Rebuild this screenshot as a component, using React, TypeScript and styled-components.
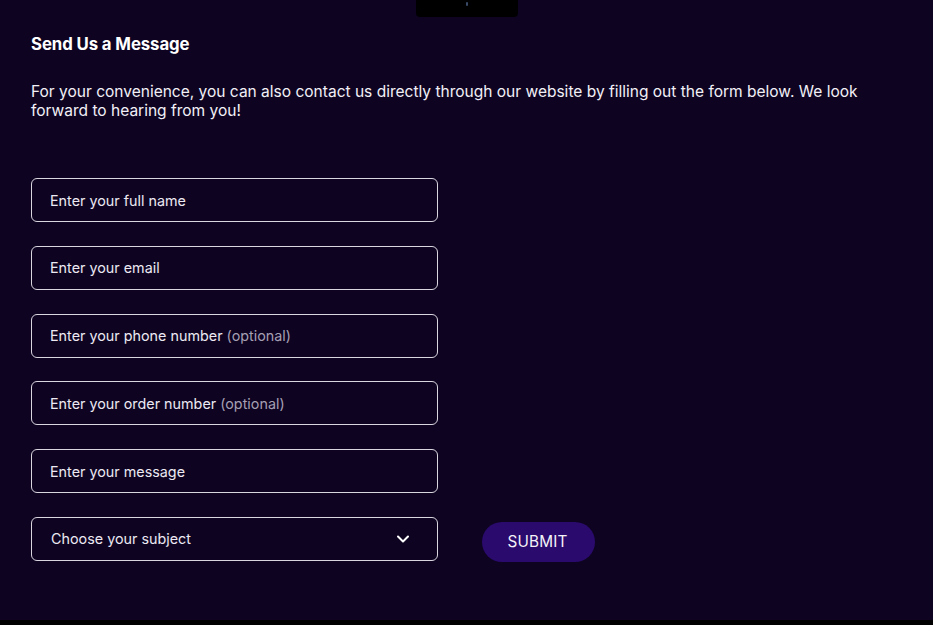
import React from "react";
import styled, { createGlobalStyle } from "styled-components";

const Global = createGlobalStyle`
  html, body { margin: 0; padding: 0; background: #0e0422; }
  body { font-family: Inter, "Noto Sans", sans-serif; color: #ffffff; }
  * { box-sizing: border-box; }
`;

const Page = styled.div`
  width: 933px;
  height: 625px;
  background: #0e0422;
  display: flex;
  flex-direction: column;
  overflow: hidden;
`;

const TopTab = styled.div`
  align-self: center;
  width: 102px;
  height: 17px;
  margin-left: 1px;
  background: #000000;
  border-radius: 0 0 4px 4px;
  display: flex;
  justify-content: center;
  padding-top: 2px;
`;

const Dot = styled.div`
  width: 2px;
  height: 4px;
  border-radius: 1px;
  background: #3a4a66;
`;

const Content = styled.main`
  flex: 1;
  padding: 17px 0 0 31px;
  display: flex;
  flex-direction: column;
`;

const Heading = styled.h2`
  margin: 0;
  font-size: 16.8px;
  font-weight: 700;
  line-height: 20px;
  letter-spacing: -0.1px;
`;

const Intro = styled.p`
  margin: 28px 0 0;
  width: 850px;
  font-size: 15.52px;
  line-height: 19px;
  color: #f2f0f6;
`;

const FormRow = styled.div`
  margin-top: 58px;
  display: flex;
  align-items: flex-end;
  gap: 44px;
`;

const Fields = styled.div`
  display: flex;
  flex-direction: column;
  gap: 23.8px;
  width: 407px;
`;

const Field = styled.div`
  height: 44px;
  border: 1px solid #d9d6e0;
  border-radius: 6px;
  display: flex;
  align-items: center;
  justify-content: space-between;
  padding: 0 27px 0 18px;
  font-size: 14.35px;
  color: #ece9f2;
`;

const Hint = styled.span`
  color: #a59fb2;
`;

const SelectText = styled.span`
  padding-left: 1px;
`;

const Submit = styled.button`
  width: 113px;
  height: 40px;
  margin-bottom: -1px;
  border: none;
  border-radius: 20px;
  background: #2a0a6c;
  color: #f4f2f8;
  font-family: Inter, "Noto Sans", sans-serif;
  font-size: 15.3px;
  letter-spacing: 0.2px;
  padding: 0 0 0 0;
  text-indent: -2px;
  cursor: pointer;
`;

const Footer = styled.div`
  height: 5px;
  background: #000000;
`;

const Chevron = () => (
  <svg width="14" height="14" viewBox="0 0 14 14" fill="none">
    <path d="M2 4.5 L7 9.5 L12 4.5" stroke="#ffffff" strokeWidth="2" strokeLinecap="round" strokeLinejoin="round" />
  </svg>
);

export default function App() {
  return (
    <Page>
      <Global />
      <TopTab>
        <Dot />
      </TopTab>
      <Content>
        <Heading>Send Us a Message</Heading>
        <Intro>
          For your convenience, you can also contact us directly through our website by filling out the form below. We look forward to hearing from you!
        </Intro>
        <FormRow>
          <Fields>
            <Field>
              <span>Enter your full name</span>
            </Field>
            <Field>
              <span>Enter your email</span>
            </Field>
            <Field>
              <span>
                Enter your phone number <Hint>(optional)</Hint>
              </span>
            </Field>
            <Field>
              <span>
                Enter your order number <Hint>(optional)</Hint>
              </span>
            </Field>
            <Field>
              <span>Enter your message</span>
            </Field>
            <Field>
              <SelectText>Choose your subject</SelectText>
              <Chevron />
            </Field>
          </Fields>
          <Submit>SUBMIT</Submit>
        </FormRow>
      </Content>
      <Footer />
    </Page>
  );
}
